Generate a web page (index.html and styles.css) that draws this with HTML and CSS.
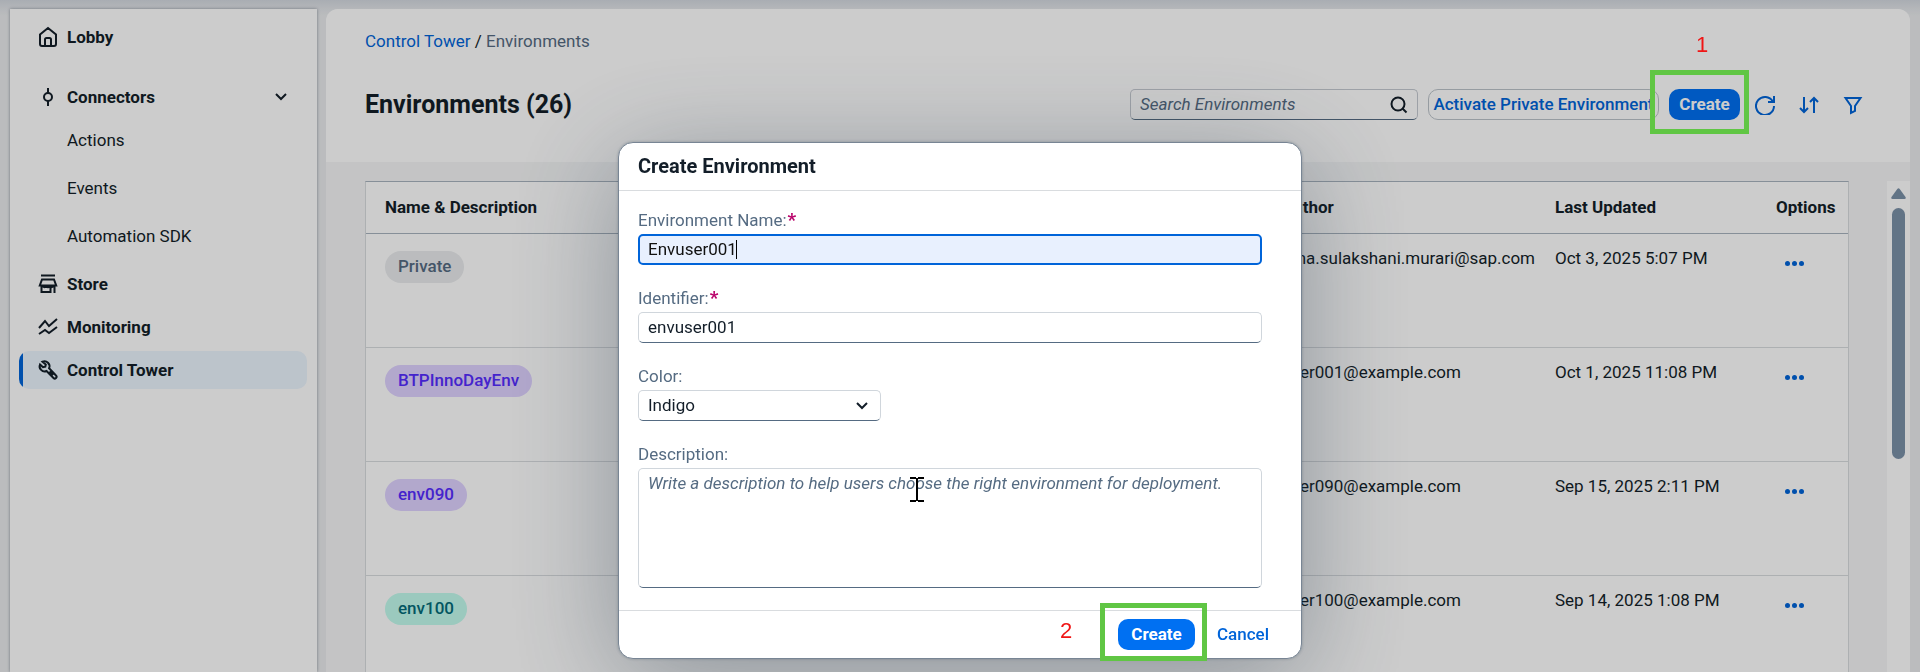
FILE: index.html
```html
<!DOCTYPE html>
<html lang="en">
<head>
<meta charset="utf-8">
<title>Environments</title>
<link rel="stylesheet" href="styles.css">
</head>
<body>
<div class="shell">
  <nav class="sidebar" aria-label="Main">
    <a class="item lobby" href="#"><svg class="icon" viewBox="0 0 18 20"><path d="M1 7.500 9 1l8 6.500V17a2 2 0 0 1-2 2H3a2 2 0 0 1-2-2zM6 19v-6.500a1.500 1.500 0 0 1 1.500-1.500h3a1.500 1.500 0 0 1 1.500 1.500V19"/></svg><span>Lobby</span></a>
    <a class="item" href="#"><svg class="icon" viewBox="0 0 18 20"><circle cx="9" cy="10" r="4"/><path d="M9 1v5M9 14v5"/></svg><span>Connectors</span><svg class="chevron" viewBox="0 0 14 10"><path d="m2 2 5 5 5-5"/></svg></a>
    <div class="sub">
      <a class="item" href="#">Actions</a>
      <a class="item" href="#">Events</a>
      <a class="item" href="#">Automation SDK</a>
    </div>
    <a class="item" href="#"><svg class="icon" viewBox="0 0 18 20"><path d="M2 1.500h14M3 5.500h12l2.200 6H.8zM2.500 11.500V18h9v-6.500M15.500 11.500V19M4 12c0 1.500 3 1.500 3 0 0 1.500 4 1.500 4 0 0 1.500 3 1.500 3 0"/></svg><span>Store</span></a>
    <a class="item" href="#"><svg class="icon" viewBox="0 0 18 20"><path d="m0 11 6-7 4 5 8-7M0 17l6-4 4 3 8-6"/></svg><span>Monitoring</span></a>
    <a class="item current" href="#" aria-current="page"><svg class="icon" viewBox="0 0 18 20"><path d="M3.500 1.700a5 5 0 0 1 6.600 6.500l6.900 7.300a1.700 1.700 0 0 1-2.500 2.500L7.500 11A5 5 0 0 1 1 4.500l3 2.700 2.300-.500.5-2.200zM10.500 11.500l3.500 3.700"/></svg><span>Control Tower</span></a>
  </nav>
  <main class="main">
    <header class="head">
      <div class="crumbs"><a href="#">Control Tower</a> <b>/</b> <span>Environments</span></div>
      <div class="bar">
        <h1>Environments (26)</h1>
        <div class="tools">
          <label class="search"><input type="search" placeholder="Search Environments" aria-label="Search Environments"><svg viewBox="0 0 18 18"><circle cx="8" cy="8" r="6.500"/><path d="m12.500 12.500 4 4"/></svg></label>
          <button class="btn outline">Activate Private Environment</button>
          <span class="marked"><button class="btn primary">Create</button><span class="frame top"></span><span class="step above">1</span></span>
          <span class="icons">
            <button class="tool" aria-label="Refresh"><svg viewBox="0 0 20 20"><path d="M17.800 6.500A9 9 0 1 0 19 11M19 1v6h-6"/></svg></button>
            <button class="tool" aria-label="Sort"><svg viewBox="0 0 20 20"><path d="M5 2v15M1 13l4 4 4-4M15 18V3M11 7l4-4 4 4"/></svg></button>
            <button class="tool" aria-label="Filter"><svg viewBox="0 0 20 20"><path d="M2.500 3h15l-5.500 8v5l-4 2v-7z"/></svg></button>
          </span>
        </div>
      </div>
    </header>
    <div class="content">
      <table class="grid">
        <colgroup><col><col class="c-author"><col class="c-date"><col class="c-opt"></colgroup>
        <thead><tr><th>Name &amp; Description</th><th>Author</th><th>Last Updated</th><th>Options</th></tr></thead>
        <tbody>
          <tr><td><span class="pill gray">Private</span></td><td>uma.sulakshani.murari@sap.com</td><td>Oct 3, 2025 5:07 PM</td><td><button class="more" aria-label="Options"><i></i><i></i><i></i></button></td></tr>
          <tr><td><span class="pill indigo">BTPInnoDayEnv</span></td><td>user001@example.com</td><td>Oct 1, 2025 11:08 PM</td><td><button class="more" aria-label="Options"><i></i><i></i><i></i></button></td></tr>
          <tr><td><span class="pill indigo">env090</span></td><td>user090@example.com</td><td>Sep 15, 2025 2:11 PM</td><td><button class="more" aria-label="Options"><i></i><i></i><i></i></button></td></tr>
          <tr><td><span class="pill teal">env100</span></td><td>user100@example.com</td><td>Sep 14, 2025 1:08 PM</td><td><button class="more" aria-label="Options"><i></i><i></i><i></i></button></td></tr>
        </tbody>
      </table>
      <div class="scroll"><svg viewBox="0 0 15 11"><path d="M6.300 1Q7.500-.5 8.700 1L14.500 9Q15.300 11 13.500 11H1.500Q-.3 11 .5 9z"/></svg><span class="thumb"></span></div>
    </div>
  </main>
</div>
<div class="overlay">
  <form class="dialog" role="dialog" aria-labelledby="title">
    <h2 id="title">Create Environment</h2>
    <div class="fields">
      <div class="field"><label class="req" for="name">Environment Name:</label><input class="text active" id="name" type="text" value="Envuser001"><span class="caret"></span></div>
      <div class="field"><label class="req" for="ident">Identifier:</label><input class="text" id="ident" type="text" value="envuser001"></div>
      <div class="field"><label for="color">Color:</label><span class="pick"><select class="text" id="color"><option>Indigo</option></select><svg class="chevron" viewBox="0 0 14 10"><path d="m2 2 5 5 5-5"/></svg></span></div>
      <div class="field"><label for="desc">Description:</label><textarea class="text" id="desc" placeholder="Write a description to help users choose the right environment for deployment."></textarea><svg class="pointer" viewBox="0 0 14 25"><path d="M0 1h6M8 1h6M7 1v23M0 24h6M8 24h6"/></svg></div>
    </div>
    <footer>
      <span class="marked"><button class="btn primary" type="button">Create</button><span class="frame bottom"></span><span class="step beside">2</span></span>
      <button class="btn plain" type="button">Cancel</button>
    </footer>
  </form>
</div>
</body>
</html>
```
FILE: styles.css
```css
* { box-sizing: border-box; }
body {
  margin: 0;
  height: 100vh;
  overflow: hidden;
  background: #eaecee;
  color: #131e29;
  font: 17px/20px Roboto, "Noto Sans", sans-serif;
}
a { color: inherit; text-decoration: none; }
button, input, select, textarea { font: inherit; color: inherit; }
svg { fill: none; stroke: currentColor; stroke-width: 2; flex: none; }

.shell {
  display: flex;
  gap: 9px;
  height: 100%;
  padding: 9px 10px 0;
  background: linear-gradient(#d4d9e0, #e2e5e9 9px, #eaecee 16px);
}

.sidebar {
  display: flex;
  flex-direction: column;
  gap: 5px;
  width: 307px;
  flex: none;
  padding: 9px 10px 0 9px;
  background: #fff;
  box-shadow: 0 0 3px #8a929c;
}
.item {
  display: flex;
  align-items: center;
  gap: 10px;
  height: 38px;
  padding: 0 19px 0 20px;
  font-weight: 700;
}
.item.lobby { margin-bottom: 17px; }
.icon { width: 18px; height: 20px; overflow: visible; }
.item .chevron { margin-left: auto; }
.chevron { width: 14px; height: 10px; }
.sub { display: flex; flex-direction: column; gap: 10px; padding-bottom: 5px; }
.sub .item { padding-left: 48px; font-weight: 400; }
.current { position: relative; overflow: hidden; border-radius: 10px; background: #ebf5fe; }
.current::before { content: ""; position: absolute; inset: 0 auto 0 0; width: 4px; background: #0064d9; }

.main {
  display: flex;
  flex-direction: column;
  flex: 1;
  overflow: hidden;
  border-radius: 12px 12px 0 0;
  background: #f5f6f7;
}
.head { padding: 22px 35px 42px 39px; background: #fff; }
.crumbs { margin-bottom: 38px; color: #556b82; }
.crumbs a { color: #0064d9; }
.crumbs b { color: #131e29; font-weight: 400; }
.bar { display: flex; align-items: center; justify-content: space-between; height: 31px; }
h1 { margin: 0; font-size: 25px; line-height: 31px; }
.tools { display: flex; align-items: center; gap: 10px; }
.icons { display: flex; margin-left: -7px; }

.search {
  display: flex;
  align-items: center;
  width: 288px;
  height: 31px;
  padding: 0 9px;
  border: 1px solid #c5cad1;
  border-bottom-color: #556b82;
  border-radius: 5px;
}
.search input { flex: 1; min-width: 0; padding: 0 0 2px; border: 0; outline: 0; background: none; }
.search svg { width: 18px; height: 18px; }
::placeholder { color: #556b82; font-style: italic; opacity: 1; }

.btn { height: 31px; padding: 0 8px 2px; border: 0; border-radius: 10px; background: none; color: #0064d9; font-weight: 700; white-space: nowrap; }
.btn.outline { width: 231px; padding: 0 0 2px; border: 1px solid #bcc3ca; font-weight: 500; }
.btn.primary { width: 71px; background: #0070f2; color: #fff; }
.tool { display: grid; place-items: center; width: 44px; height: 31px; padding: 0; border: 0; background: none; color: #0064d9; }
.tool svg { width: 20px; height: 20px; }

.marked { position: relative; display: flex; }
.frame { position: absolute; z-index: 20; border: 5px solid #60c644; pointer-events: none; }
.frame.top { inset: -19px -9px -14px -19px; }
.frame.bottom { inset: -16px -12px -11px -18px; }
.step { position: absolute; z-index: 20; color: #f01515; font: 22px/22px "Liberation Sans", sans-serif; }
.step.above { left: 27px; top: -55px; }
.step.beside { left: -58px; top: 1px; }

.content { display: flex; align-items: flex-start; gap: 38px; flex: 1; padding: 19px 0 0 39px; }
.grid { flex: 1; table-layout: fixed; border-spacing: 0; border: 1px solid #d9dcdf; border-top-color: #a8b3be; background: #fff; }
.c-author { width: 271px; }
.c-date { width: 221px; }
.c-opt { width: 92px; }
.grid th { height: 52px; padding: 0 0 2px 20px; border-bottom: 1px solid #a8b3be; text-align: left; }
.grid td { height: 114px; padding: 14px 0 0 20px; border-bottom: 1px solid #d9dcdf; vertical-align: top; }
.grid th:first-child, .grid td:first-child { padding-left: 19px; }
.grid td:first-child { padding-top: 17px; }
.pill { display: inline-block; padding: 0 13px 1px; border-radius: 16px; line-height: 31px; font-weight: 500; }
.gray { background: #eaecee; color: #556b82; }
.indigo { background: #dfd2ff; color: #552cff; }
.teal { background: #c2fcee; color: #046c7a; }
.more { display: flex; gap: 2px; margin-top: 13px; padding: 0 9px; border: 0; background: none; }
.more i { width: 5px; height: 5px; border-radius: 50%; background: #0064d9; }

.scroll { display: flex; flex-direction: column; align-items: center; gap: 9px; align-self: stretch; width: 23px; padding-top: 7px; background: #fff; }
.scroll svg { width: 15px; height: 11px; fill: #7b91a8; stroke: none; }
.thumb { width: 13px; height: 251px; border-radius: 7px; background: #7b91a8; }

.overlay {
  position: fixed;
  inset: 0;
  z-index: 10;
  display: flex;
  justify-content: center;
  align-items: flex-start;
  padding-top: 142px;
  background: rgba(0, 0, 0, .2);
}
.dialog {
  width: 684px;
  border: 1px solid #788594;
  border-radius: 15px;
  background: #fff;
  box-shadow: 0 20px 110px rgba(34, 53, 72, .38), 0 0 3px rgba(34, 53, 72, .3);
}
h2 { margin: 0; padding: 0 19px; border-bottom: 1px solid #d9dcdf; font-size: 20px; line-height: 47px; }
.fields { display: flex; flex-direction: column; gap: 23px; padding: 19px 39px 22px 19px; }
.field { position: relative; display: flex; flex-direction: column; gap: 4px; }
.field label { color: #556b82; }
.req::after { content: "*"; margin-left: 1px; color: #ba066c; font-weight: 700; font-size: 19px; line-height: 16px; }
.text {
  width: 100%;
  height: 31px;
  margin: 0;
  padding: 0 9px 2px;
  border: 1px solid #d0d6dc;
  border-bottom-color: #556b82;
  border-radius: 5px;
  outline: 0;
  background: #fff;
}
.text.active { padding: 0 8px 2px; border: 2px solid #0064d9; background: #e8f0fe; color: #111; }
.caret { position: absolute; left: 98px; bottom: 6px; width: 1px; height: 19px; background: #000; pointer-events: none; }
.pick { position: relative; width: 243px; }
select.text { display: block; appearance: none; }
.pick .chevron { position: absolute; right: 12px; top: 11px; }
textarea.text { display: block; height: 120px; padding: 4px 9px; resize: none; }
.pointer { position: absolute; left: 272px; top: 33px; width: 14px; height: 25px; color: #000; }
footer { display: flex; justify-content: flex-end; align-items: flex-start; gap: 14px; height: 48px; padding: 8px 24px 0; border-top: 1px solid #d9dcdf; }
footer .btn.primary { width: 77px; }
footer .btn.plain { width: 68px; padding: 0 0 2px; font-weight: 500; }
```
